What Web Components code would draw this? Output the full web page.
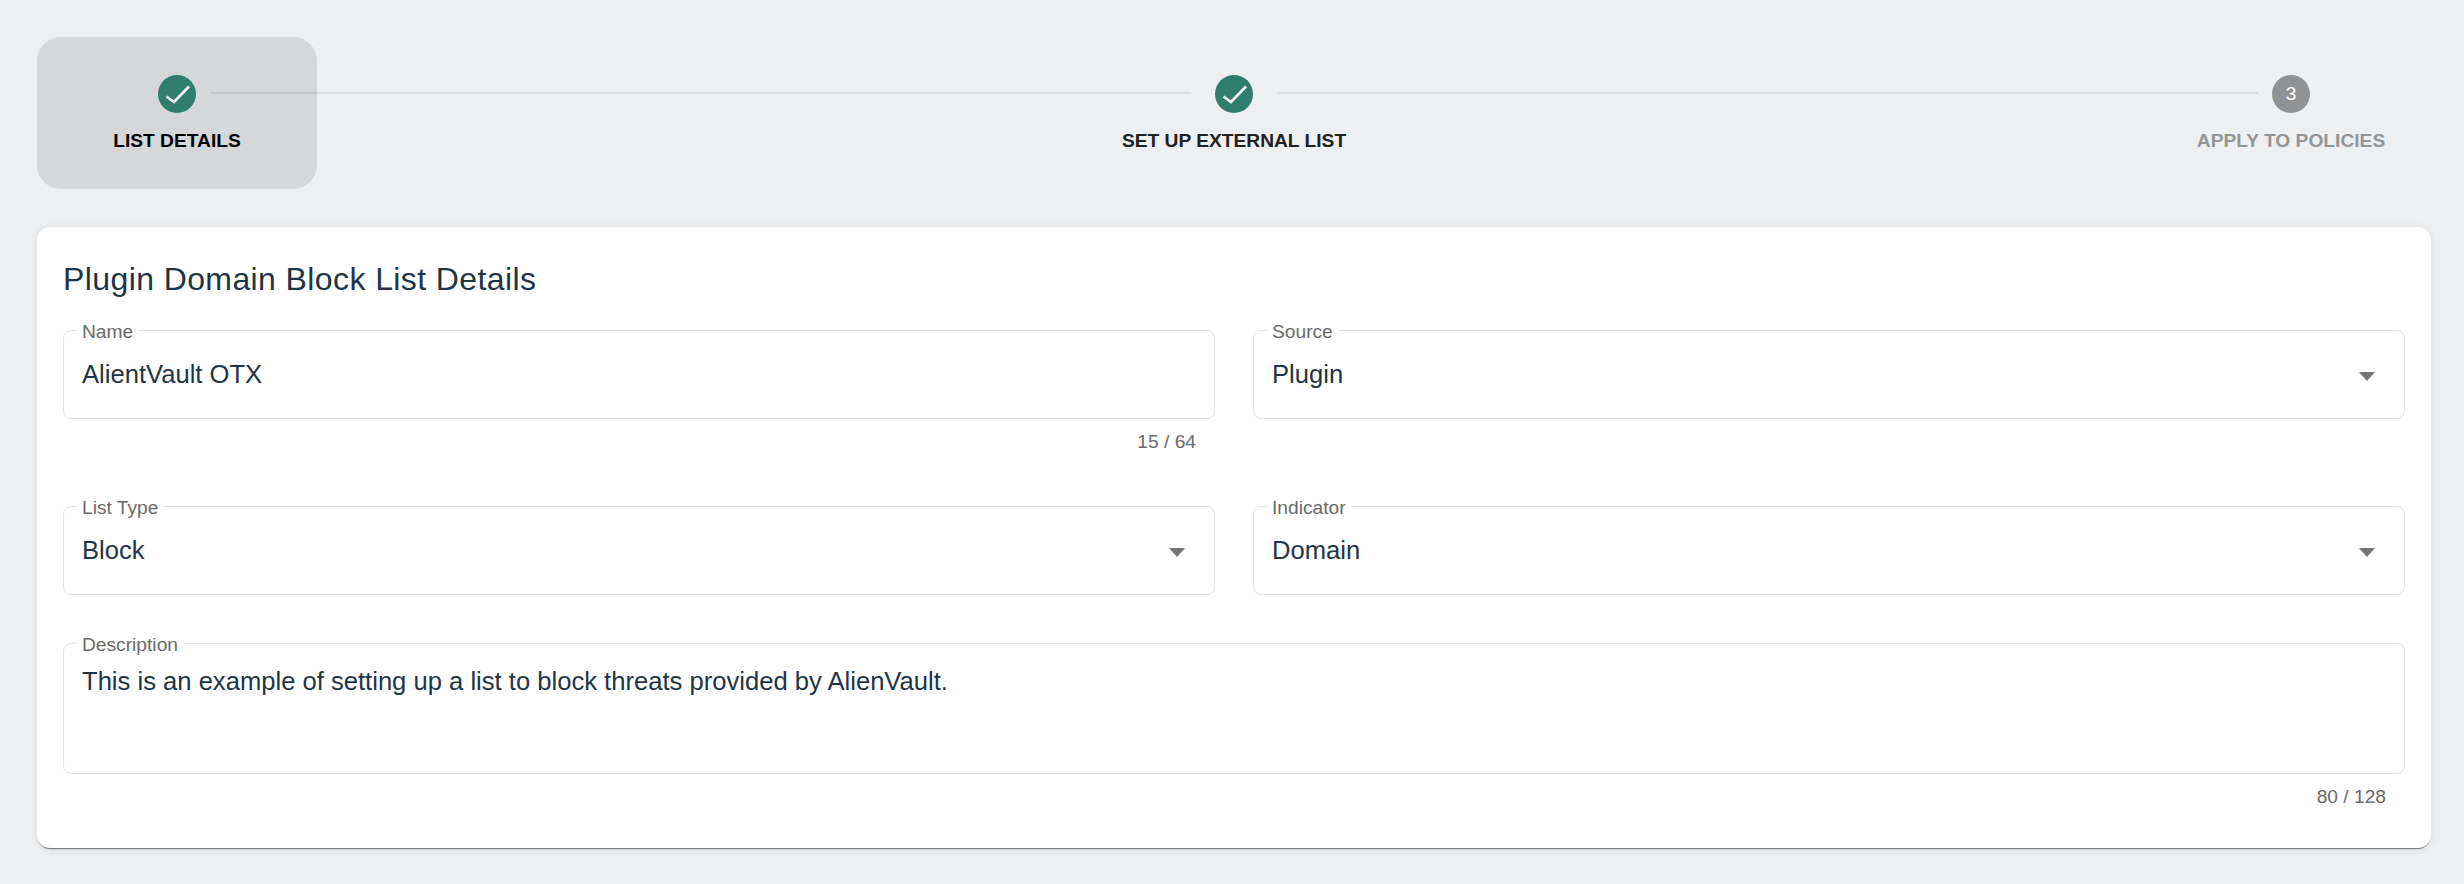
<!DOCTYPE html>
<html lang="en">
<head>
<meta charset="utf-8">
<title>Plugin Domain Block List Details</title>
<style>
  html, body { margin: 0; background: #eeeff1; }
  body { font-family: "Liberation Sans", Arial, sans-serif; color: #1e3547; }
</style>
</head>
<body>
<list-page>
  <list-stepper>
    <list-step state="done" selected label="LIST DETAILS"></list-step>
    <list-step state="done" label="SET UP EXTERNAL LIST"></list-step>
    <list-step number="3" label="APPLY TO POLICIES"></list-step>
  </list-stepper>
  <details-card heading="Plugin Domain Block List Details">
    <form-field label="Name" value="AlientVault OTX" hint="15 / 64"></form-field>
    <form-field label="Source" value="Plugin" select></form-field>
    <form-field label="List Type" value="Block" select></form-field>
    <form-field label="Indicator" value="Domain" select></form-field>
    <form-field class="wide" label="Description" value="This is an example of setting up a list to block threats provided by AlienVault." hint="80 / 128" area></form-field>
  </details-card>
</list-page>

<script>
class ListPage extends HTMLElement {
  constructor () {
    super()
    this.attachShadow({ mode: 'open' }).innerHTML = /*html*/`
      <style>
        :host { display: flex; flex-direction: column; gap: 38px; padding: 37px 33px 36px 37px; }
      </style>
      <slot></slot>
    `
  }
}

class ListStepper extends HTMLElement {
  constructor () {
    super()
    this.attachShadow({ mode: 'open' })
  }

  connectedCallback () {
    const steps = [...this.children]
    this.shadowRoot.innerHTML = /*html*/`
      <style>
        :host { display: flex; align-items: flex-start; }
        .line { flex: 1; height: 2px; margin-top: 55px; background: rgba(0, 0, 0, .07); position: relative; }
        .line.first { margin-left: -107px; margin-right: -97px; }
        .line.second { margin-left: -97px; margin-right: -107px; }
      </style>
      <slot name="s0"></slot>
      <div class="line first"></div>
      <slot name="s1"></slot>
      <div class="line second"></div>
      <slot name="s2"></slot>
    `
    steps.forEach((step, i) => step.setAttribute('slot', 's' + i))
  }
}

class ListStep extends HTMLElement {
  constructor () {
    super()
    this.attachShadow({ mode: 'open' })
  }

  connectedCallback () {
    const done = this.getAttribute('state') === 'done'
    const mark = done
      ? `<svg width="38" height="38" viewBox="0 0 38 38"><polyline points="8.5,21.5 16,27 31,11.5" fill="none" stroke="#fff" stroke-width="2.6"/></svg>`
      : `<span>${this.getAttribute('number')}</span>`
    this.shadowRoot.innerHTML = /*html*/`
      <style>
        :host { flex: none; width: 280px; height: 152px; box-sizing: border-box; padding-top: 38px;
          display: flex; flex-direction: column; align-items: center; border-radius: 24px; }
        :host([selected]) { background: #d6d7d9; }
        .icon { width: 38px; height: 38px; border-radius: 50%; display: flex; align-items: center; justify-content: center;
          background: ${done ? '#2e7d6d' : '#919294'}; color: #fff; font-size: 19.2px; }
        .label { margin-top: 16px; font-size: 19.2px; line-height: 24px; font-weight: 700; white-space: nowrap;
          color: ${done ? (this.hasAttribute('selected') ? '#000' : '#212121') : '#949596'}; }
      </style>
      <div class="icon">${mark}</div>
      <div class="label">${this.getAttribute('label')}</div>
    `
  }
}

class DetailsCard extends HTMLElement {
  constructor () {
    super()
    this.attachShadow({ mode: 'open' })
  }

  connectedCallback () {
    this.shadowRoot.innerHTML = /*html*/`
      <style>
        :host { display: block; background: #fff; border-radius: 13px; padding: 32px 26px 0;
          height: 621px; box-sizing: border-box;
          box-shadow: 0 2px 1px -1px rgba(0, 0, 0, .5), 0 1px 8px 0 rgba(0, 0, 0, .09); }
        h2 { margin: 0; font-size: 32px; line-height: 40px; font-weight: 400; letter-spacing: .4px; color: #1e3547; }
        .grid { display: grid; grid-template-columns: 1fr 1fr; column-gap: 38px; margin-top: 21px; }
        ::slotted(.wide) { grid-column: 1 / -1; }
      </style>
      <h2>${this.getAttribute('heading')}</h2>
      <div class="grid"><slot></slot></div>
    `
  }
}

class FormField extends HTMLElement {
  constructor () {
    super()
    this.attachShadow({ mode: 'open' })
  }

  connectedCallback () {
    const area = this.hasAttribute('area')
    const hint = this.getAttribute('hint')
    const caret = this.hasAttribute('select')
      ? `<svg class="caret" width="16" height="9" viewBox="0 0 16 9"><path d="M0 0h16l-8 9z" fill="#757575"/></svg>`
      : ''
    this.shadowRoot.innerHTML = /*html*/`
      <style>
        :host { display: block; height: ${area ? 'auto' : '176px'}; }
        :host([select]:nth-child(n+3)) { height: 137px; }
        fieldset { margin: 0; padding: 0 18px; height: ${area ? '141px' : '99px'}; box-sizing: border-box; min-width: 0;
          border: 1.5px solid #e2e2e2; border-radius: 8px; display: flex; justify-content: space-between; }
        legend { padding: 2px 5px 0; margin-left: -5px; font-size: 19.2px; line-height: 19px; color: #6a6a6a; }
        .row { display: flex; flex: 1; justify-content: space-between; align-items: ${area ? 'flex-start' : 'center'}; }
        .value { font-size: 25.6px; line-height: 32px; color: #1e3547; margin-top: ${area ? '11px' : '-11px'}; white-space: nowrap; }
        .caret { margin-right: 11px; margin-top: -6px; }
        .hint { text-align: right; padding: 12px 19px 0; font-size: 19.2px; line-height: 21px; color: #6a6a6a; }
      </style>
      <fieldset>
        <legend>${this.getAttribute('label')}</legend>
        <div class="row"><span class="value">${this.getAttribute('value')}</span>${caret}</div>
      </fieldset>
      ${hint ? `<div class="hint">${hint}</div>` : ''}
    `
  }
}

customElements.define('list-page', ListPage)
customElements.define('list-stepper', ListStepper)
customElements.define('list-step', ListStep)
customElements.define('details-card', DetailsCard)
customElements.define('form-field', FormField)
</script>
</body>
</html>
